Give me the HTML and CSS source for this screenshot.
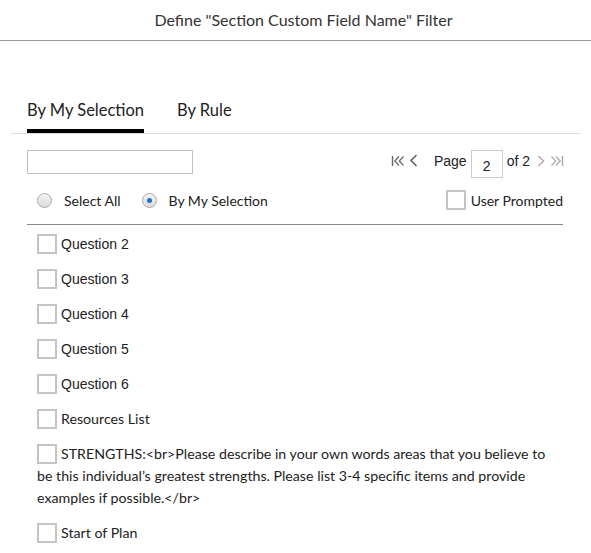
FILE: index.html
```html
<!DOCTYPE html>
<html>
<head>
<meta charset="utf-8">
<link rel="stylesheet" href="styles.css">
</head>
<body>
<header class="title">Define "Section Custom Field Name" Filter</header>
<nav class="tabs">
  <div class="tab active">By My Selection</div>
  <div class="tab">By Rule</div>
</nav>
<main class="panel">
  <div class="toolbar">
    <input class="search" type="text">
    <div class="pager">
      <span class="pg-icon">
        <svg width="14" height="12" viewBox="0 0 14 12"><path d="M1.5 1v10" stroke="#666" stroke-width="1.4" fill="none"/><path d="M8 1.5 3.8 6 8 10.5M12.5 1.5 8.3 6 12.5 10.5" stroke="#666" stroke-width="1.2" fill="none"/></svg>
      </span>
      <span class="pg-icon prev">
        <svg width="9" height="13" viewBox="0 0 9 13"><path d="M7.5 1 2 6.5 7.5 12" stroke="#555" stroke-width="1.4" fill="none"/></svg>
      </span>
      <span class="pg-label">Page</span>
      <span class="pg-box">2</span>
      <span class="pg-label">of 2</span>
      <span class="pg-icon next">
        <svg width="8" height="12" viewBox="0 0 8 12"><path d="M1.5 1 6.5 6 1.5 11" stroke="#aaa" stroke-width="1.3" fill="none"/></svg>
      </span>
      <span class="pg-icon last">
        <svg width="14" height="12" viewBox="0 0 14 12"><path d="M1.5 1.5 5.7 6 1.5 10.5M6 1.5 10.2 6 6 10.5" stroke="#aaa" stroke-width="1.2" fill="none"/><path d="M12.5 1v10" stroke="#aaa" stroke-width="1.4" fill="none"/></svg>
      </span>
    </div>
  </div>
  <div class="options">
    <div class="radios">
      <label class="radio"><span class="dot"></span>Select All</label>
      <label class="radio"><span class="dot on"></span>By My Selection</label>
    </div>
    <label class="prompted"><span class="box"></span>User Prompted</label>
  </div>
  <ul class="list">
    <li class="item arial"><span class="box"></span>Question 2</li>
    <li class="item arial"><span class="box"></span>Question 3</li>
    <li class="item arial"><span class="box"></span>Question 4</li>
    <li class="item arial"><span class="box"></span>Question 5</li>
    <li class="item arial"><span class="box"></span>Question 6</li>
    <li class="item"><span class="box"></span>Resources List</li>
    <li class="item"><span class="box"></span>STRENGTHS:&lt;br&gt;Please describe in your own words areas that you believe to be this individual’s greatest strengths. Please list 3-4 specific items and provide examples if possible.&lt;/br&gt;</li>
    <li class="item"><span class="box"></span>Start of Plan</li>
  </ul>
</main>
</body>
</html>
```
FILE: styles.css
```css
* { box-sizing: border-box; }
body {
  margin: 0;
  font-family: Lato, "Liberation Sans", sans-serif;
  color: #222;
  background: #fff;
}
.title {
  height: 41px;
  line-height: 40px;
  text-align: center;
  font-size: 16px;
  color: #333;
  padding-left: 16px;
  border-bottom: 1px solid #999;
}
.tabs {
  display: flex;
  gap: 33px;
  margin: 59px 11px 0;
  padding-left: 16px;
  border-bottom: 1px solid #ddd;
}
.tab {
  font-size: 16.5px;
  line-height: 20px;
  padding-bottom: 9px;
  border-bottom: 4px solid transparent;
  color: #222;
}
.tab.active { border-bottom-color: #000; }
.panel {
  padding: 0 28px 0 27px;
}
.toolbar {
  display: flex;
  justify-content: space-between;
  align-items: flex-start;
  margin-top: 16px;
}
.search {
  width: 166px;
  height: 24px;
  border: 1px solid #c0c0c0;
  margin: 0;
  padding: 0 4px;
  outline: none;
}
.pager {
  display: flex;
  align-items: center;
  font-family: "Liberation Sans", Arial, sans-serif;
  font-size: 14px;
  color: #222;
  margin-right: -1px;
}
.pg-icon, .pg-label { margin-bottom: 7px; }
.pg-icon { display: flex; align-items: center; }
.pg-icon.prev { margin-left: 4px; margin-right: 16px; }
.pg-icon.next { margin-left: 7px; margin-right: 5px; }
.pg-box {
  width: 32px;
  height: 28px;
  border: 1px solid #ccc;
  margin: 0 4px;
  display: flex;
  align-items: center;
  justify-content: center;
  padding-top: 3px;
}
.options {
  display: flex;
  justify-content: space-between;
  align-items: center;
  margin-top: 12px;
  padding-bottom: 14px;
  box-sizing: content-box;
  height: 20px;
  border-bottom: 1px solid #888;
}
.radios {
  display: flex;
  gap: 21px;
  padding-left: 10px;
  font-size: 14px;
}
.radio {
  display: flex;
  align-items: center;
  gap: 12px;
}
.dot {
  width: 15px;
  height: 15px;
  border-radius: 50%;
  border: 1px solid #aaa;
  background: linear-gradient(#f2f2f2, #dcdcdc);
  display: flex;
  align-items: center;
  justify-content: center;
}
.dot.on::after {
  content: "";
  width: 5px;
  height: 5px;
  border-radius: 50%;
  background: #1f6fc0;
}
.prompted {
  display: flex;
  align-items: center;
  gap: 5px;
  font-size: 14px;
  margin-left: -2px;
}
.box {
  display: inline-block;
  width: 20px;
  height: 20px;
  border: 2px solid #c4c4c4;
  background: #fff;
}
.list {
  list-style: none;
  margin: 8px 0 0;
  padding: 0 15px 0 10px;
  font-size: 14.2px;
  line-height: 22px;
}
.item { margin-bottom: 13px; }
.item .box { vertical-align: middle; margin: -3px 4px 0 0; }
.item.arial { font-family: "Liberation Sans", Arial, sans-serif; font-size: 14px; }
```
